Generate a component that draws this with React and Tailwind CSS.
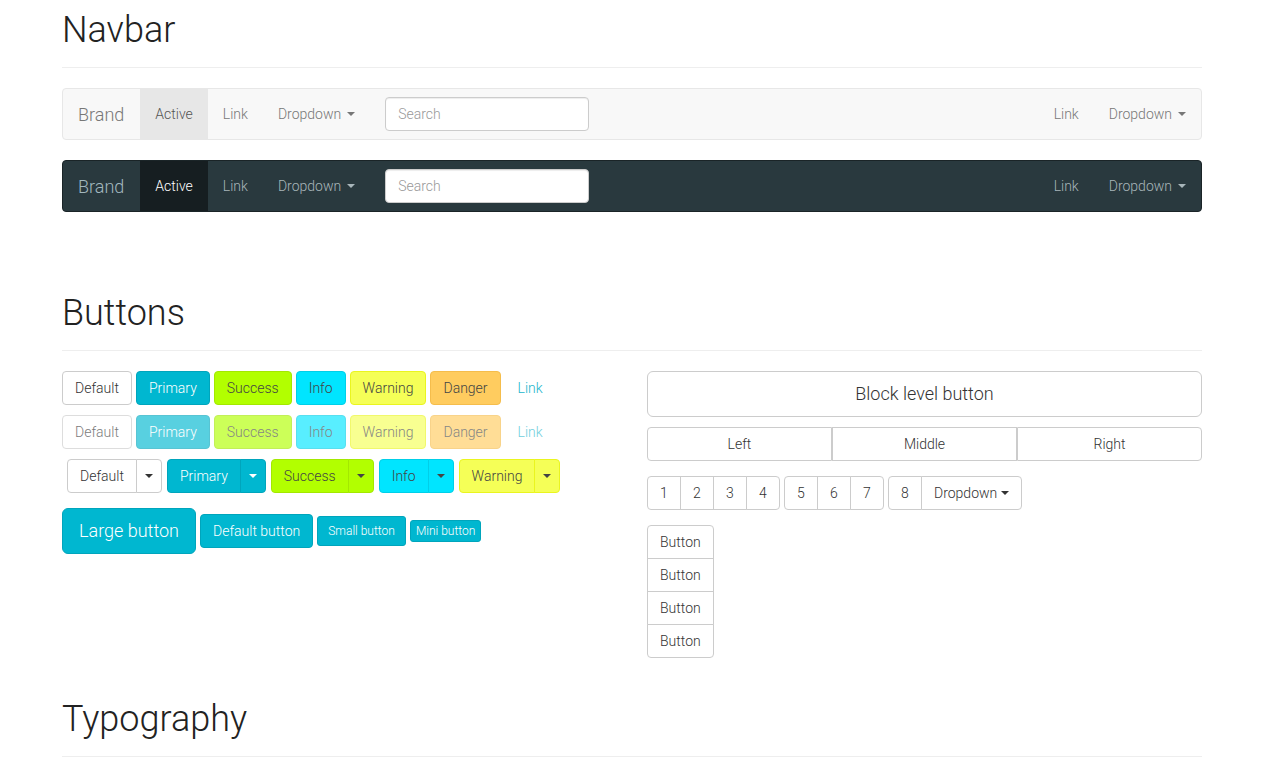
import React from "react";

function Caret({ className = "" }) {
  return (
    <span
      className={`inline-block w-0 h-0 border-x-[4px] border-x-transparent border-t-[4px] border-t-current ${className}`}
    />
  );
}

function Heading({ children, className = "" }) {
  return (
    <h1
      className={`text-[36px] leading-[42px] font-light text-[#222] pb-[16px] border-b border-[#eeeeee] ${className}`}
    >
      {children}
    </h1>
  );
}

function Navbar({ dark, className = "" }) {
  const wrap = dark ? "bg-[#29393e] border-[#1a2427]" : "bg-[#f8f8f8] border-[#e7e7e7]";
  const brand = dark ? "text-[#a3b8be]" : "text-[#777777]";
  const link = dark ? "text-[#a8b6ba]" : "text-[#777777]";
  const active = dark ? "bg-[#161e21] text-white" : "bg-[#e7e7e7] text-[#555555]";
  return (
    <div className={`h-[52px] flex border rounded-[4px] ${wrap} ${className}`}>
      <a className={`pl-[15px] pr-[16px] flex items-center text-[18px] ${brand}`}>Brand</a>
      <a className={`px-[15px] flex items-center ${active}`}>Active</a>
      <a className={`px-[15px] flex items-center ${link}`}>Link</a>
      <a className={`px-[15px] flex items-center gap-[6px] ${link}`}>
        Dropdown <Caret />
      </a>
      <div className="px-[15px] flex items-center">
        <input
          placeholder="Search"
          className="w-[204px] h-[34px] px-[12px] bg-white border border-[#cccccc] rounded-[4px] text-[14px] placeholder:text-[#999999] shadow-[inset_0_1px_1px_rgba(0,0,0,0.075)] outline-none"
        />
      </div>
      <div className="ml-auto flex">
        <a className={`px-[15px] flex items-center ${link}`}>Link</a>
        <a className={`px-[15px] flex items-center gap-[6px] ${link}`}>
          Dropdown <Caret />
        </a>
      </div>
    </div>
  );
}

const variants = {
  default: "bg-white border-[#cccccc] text-[#333333]",
  primary: "bg-[#00b7d0] border-[#00a5bc] text-white",
  success: "bg-[#b2ff00] border-[#a3e800] text-[#444444]",
  info: "bg-[#00e5ff] border-[#00cfe8] text-[#444444]",
  warning: "bg-[#f5ff57] border-[#eaf51f] text-[#444444]",
  danger: "bg-[#ffcc5f] border-[#f5bd4c] text-[#444444]",
  link: "bg-transparent border-transparent text-[#22b5cc]",
};

const sizes = {
  md: "h-[34px] px-[12px] text-[14px] rounded-[4px]",
  lg: "h-[46px] px-[16px] text-[18px] rounded-[6px]",
  sm: "h-[30px] px-[10px] text-[12px] rounded-[3px]",
  xs: "h-[22px] px-[5px] text-[12px] rounded-[3px]",
  caret: "h-[34px] px-[8px] text-[14px] rounded-[4px]",
  num: "h-[34px] w-[34px] text-[14px] rounded-[4px]",
};

function Btn({ v = "default", size = "md", disabled, className = "", children }) {
  return (
    <button
      className={`inline-flex items-center justify-center border leading-[20px] whitespace-nowrap ${sizes[size]} ${variants[v]} ${disabled ? "opacity-65" : ""} ${className}`}
    >
      {children}
    </button>
  );
}

function Split({ v, label }) {
  return (
    <div className="flex">
      <Btn v={v} className="rounded-r-none">{label}</Btn>
      <Btn v={v} size="caret" className="rounded-l-none -ml-px">
        <Caret />
      </Btn>
    </div>
  );
}

const names = [
  ["default", "Default"],
  ["primary", "Primary"],
  ["success", "Success"],
  ["info", "Info"],
  ["warning", "Warning"],
  ["danger", "Danger"],
  ["link", "Link"],
];

export default function App() {
  return (
    <div
      className="w-[1202px] pl-[62px] pt-[9px] pb-[40px] text-[14px] font-light text-[#333333]"
      style={{ fontFamily: "Roboto, 'Liberation Sans', sans-serif" }}
    >
      <Heading>Navbar</Heading>
      <Navbar className="mt-[20px]" />
      <Navbar dark className="mt-[20px]" />

      <Heading className="mt-[80px]">Buttons</Heading>
      <div className="mt-[20px] flex">
        <div className="w-[555px]">
          <div className="flex gap-[4px]">
            {names.map(([v, l]) => (
              <Btn key={v} v={v}>{l}</Btn>
            ))}
          </div>
          <div className="mt-[10px] flex gap-[4px]">
            {names.map(([v, l]) => (
              <Btn key={v} v={v} disabled>{l}</Btn>
            ))}
          </div>
          <div className="mt-[10px] ml-[5px] flex gap-[5px]">
            <Split v="default" label="Default" />
            <Split v="primary" label="Primary" />
            <Split v="success" label="Success" />
            <Split v="info" label="Info" />
            <Split v="warning" label="Warning" />
          </div>
          <div className="mt-[15px] flex items-center gap-[4px]">
            <Btn v="primary" size="lg">Large button</Btn>
            <Btn v="primary">Default button</Btn>
            <Btn v="primary" size="sm">Small button</Btn>
            <Btn v="primary" size="xs">Mini button</Btn>
          </div>
        </div>

        <div className="w-[555px] ml-[30px]">
          <Btn size="lg" className="w-full">Block level button</Btn>
          <div className="mt-[10px] grid grid-cols-3">
            <Btn className="rounded-r-none">Left</Btn>
            <Btn className="rounded-none">Middle</Btn>
            <Btn className="rounded-l-none">Right</Btn>
          </div>
          <div className="mt-[15px] flex gap-[4px]">
            <div className="flex">
              <Btn size="num" className="rounded-r-none">1</Btn>
              <Btn size="num" className="rounded-none -ml-px">2</Btn>
              <Btn size="num" className="rounded-none -ml-px">3</Btn>
              <Btn size="num" className="rounded-l-none -ml-px">4</Btn>
            </div>
            <div className="flex">
              <Btn size="num" className="rounded-r-none">5</Btn>
              <Btn size="num" className="rounded-none -ml-px">6</Btn>
              <Btn size="num" className="rounded-l-none -ml-px">7</Btn>
            </div>
            <div className="flex">
              <Btn size="num" className="rounded-r-none">8</Btn>
              <Btn className="rounded-l-none -ml-px gap-[4px]">
                Dropdown <Caret />
              </Btn>
            </div>
          </div>
          <div className="mt-[15px] flex flex-col w-fit">
            <Btn className="rounded-b-none">Button</Btn>
            <Btn className="rounded-none -mt-px">Button</Btn>
            <Btn className="rounded-none -mt-px">Button</Btn>
            <Btn className="rounded-t-none -mt-px">Button</Btn>
          </div>
        </div>
      </div>

      <Heading className="mt-[40px]">Typography</Heading>
    </div>
  );
}
